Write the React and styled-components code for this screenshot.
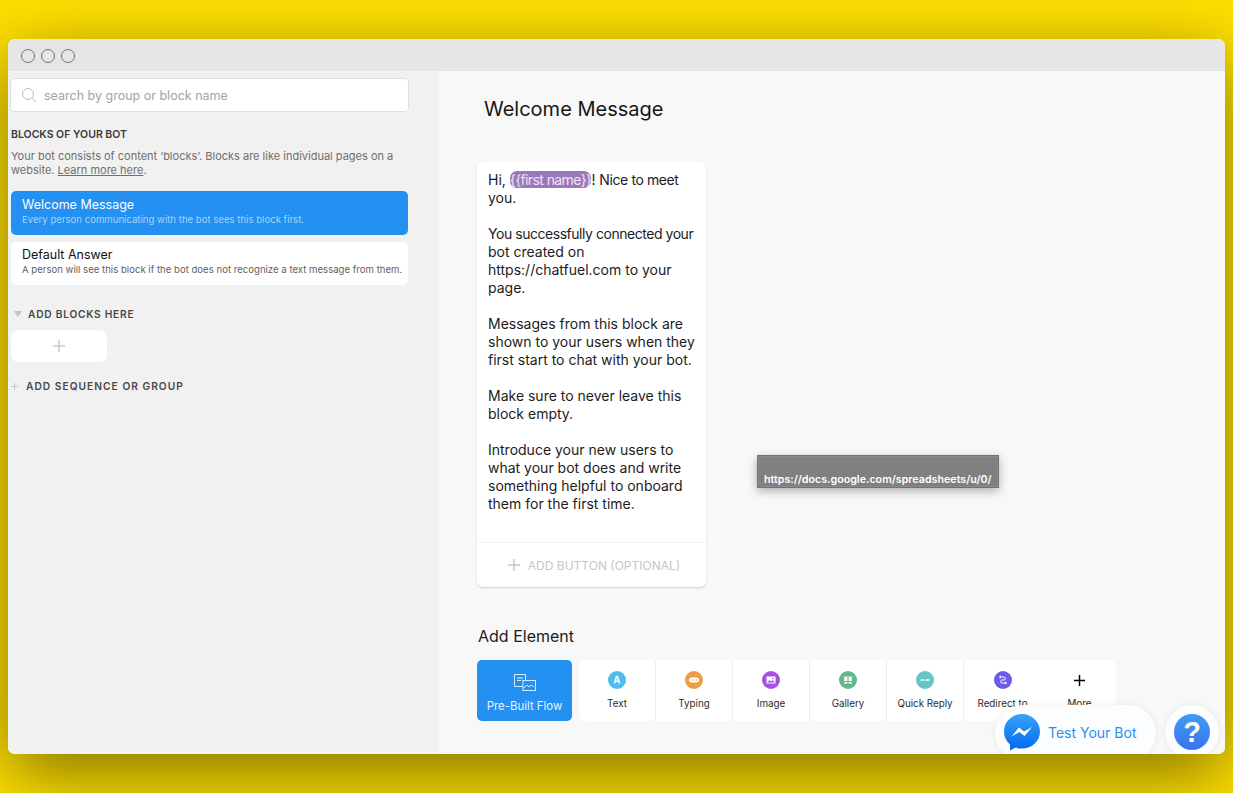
import React from "react";
import styled, { createGlobalStyle } from "styled-components";

const Global = createGlobalStyle`
  html, body { margin: 0; padding: 0; height: 100%; }
  body {
    font-family: Inter, "Liberation Sans", sans-serif;
    background: #ffe000;
    overflow: hidden;
    -webkit-font-smoothing: antialiased;
  }
`;

const Page = styled.div`
  height: 793px;
  box-sizing: border-box;
  padding: 39px 8px;
`;

const Win = styled.div`
  position: relative;
  height: 715px;
  border-radius: 7px;
  overflow: hidden;
  display: flex;
  flex-direction: column;
  background: #f8f8f8;
`;

const Shadow = styled.div`
  border-radius: 7px;
  box-shadow: 0 20px 70px rgba(0, 0, 0, 0.5);
`;

const TitleBar = styled.div`
  height: 32px;
  flex: none;
  box-sizing: border-box;
  background: #e6e6e6;
  display: flex;
  align-items: center;
  gap: 6px;
  padding: 2px 0 0 13px;
`;

const Light = styled.span`
  width: 14px;
  height: 14px;
  box-sizing: border-box;
  border: 1.5px solid #747474;
  border-radius: 50%;
`;

const Body = styled.div`
  flex: 1;
  display: flex;
  min-height: 0;
`;

const Side = styled.aside`
  width: 430px;
  flex: none;
  background: #f1f1f1;
  padding: 7px 29px 0 2px;
  box-sizing: border-box;
`;

const Search = styled.div`
  height: 34px;
  box-sizing: border-box;
  background: #fff;
  border: 1px solid #dedede;
  border-radius: 4px;
  display: flex;
  align-items: center;
  gap: 7px;
  padding-left: 10px;
  font-size: 12.5px;
  color: #a3a3a3;
`;

const Heading = styled.h3`
  margin: 16px 0 0 1px;
  font-size: 10.5px;
  line-height: 14px;
  font-weight: 600;
  color: #3c3c3c;
`;

const Hint = styled.p`
  margin: 7px 0 0 1px;
  font-size: 11px;
  line-height: 14px;
  color: #6f6f6f;

  u {
    text-underline-offset: 1px;
  }
`;

const BlockCard = styled.div`
  margin: ${(p) => (p.$active ? "14px" : "7px")} 1px 0;
  height: ${(p) => (p.$active ? "44px" : "43px")};
  box-sizing: border-box;
  padding: ${(p) => (p.$active ? "6px" : "5px")} 0 0 11px;
  border-radius: 5px;
  background: ${(p) => (p.$active ? "#2390f2" : "#fff")};
`;

const BlockTitle = styled.div`
  font-size: 12.5px;
  line-height: 15px;
  color: ${(p) => (p.$active ? "#fff" : "#111")};
`;

const BlockDesc = styled.div`
  margin-top: 1px;
  font-size: 9.6px;
  line-height: 14px;
  white-space: nowrap;
  color: ${(p) => (p.$active ? "#a6d2fa" : "#5f5f5f")};
`;

const GroupRow = styled.div`
  display: flex;
  align-items: center;
  height: 14px;
  margin-top: ${(p) => p.$top}px;
  padding-left: ${(p) => p.$left}px;
  gap: ${(p) => p.$gap}px;
  font-size: 10.2px;
  font-weight: 600;
  letter-spacing: ${(p) => p.$spacing}px;
  color: #484848;
`;

const Caret = styled.span`
  width: 0;
  height: 0;
  border-left: 4px solid transparent;
  border-right: 4px solid transparent;
  border-top: 6px solid #c4c4c4;
`;

const AddBlock = styled.div`
  margin: 9px 0 0 1px;
  width: 96px;
  height: 32px;
  border-radius: 7px;
  background: #fff;
  display: flex;
  align-items: center;
  justify-content: center;
`;

const Main = styled.main`
  flex: 1;
  background: #f8f8f8;
  padding: 26px 0 0 39px;
`;

const Title = styled.h1`
  margin: 0 0 0 7px;
  font-size: 20px;
  line-height: 24px;
  font-weight: 400;
  color: #161616;
`;

const MessageCard = styled.section`
  margin-top: 41px;
  width: 229px;
  height: 425px;
  box-sizing: border-box;
  background: #fff;
  border-radius: 6px;
  box-shadow: 0 1px 2px rgba(0, 0, 0, 0.16);
  display: flex;
  flex-direction: column;
`;

const MessageText = styled.div`
  flex: 1;
  padding: 9px 8px 0 11px;
  font-size: 14px;
  line-height: 18px;
  color: #1c1c1c;
`;

const Para = styled.p`
  margin: 0 0 18px;
`;

const Tight = styled.span`
  letter-spacing: ${(p) => p.$by}px;
`;

const Token = styled.span`
  background: #9b78bb;
  color: #eee6f4;
  border-radius: 7px;
  letter-spacing: -0.6px;
`;

const AddButton = styled.div`
  height: 45px;
  flex: none;
  box-sizing: border-box;
  padding-left: 5px;
  border-top: 1px solid #f4f4f4;
  display: flex;
  align-items: center;
  justify-content: center;
  gap: 8px;
  font-size: 12px;
  color: #c6c6c6;
`;

const AddTitle = styled.h2`
  margin: 39px 0 0 1px;
  font-size: 16px;
  line-height: 20px;
  font-weight: 400;
  color: #1c1c1c;
`;

const ElementRow = styled.div`
  margin-top: 14px;
  display: flex;
  gap: 7px;
`;

const FlowButton = styled.div`
  width: 95px;
  height: 61px;
  box-sizing: border-box;
  padding-top: 14px;
  border-radius: 5px;
  background: #2390f2;
  color: #eaf4fe;
  font-size: 11.4px;
  line-height: 14px;
  display: flex;
  flex-direction: column;
  align-items: center;
  gap: 8px;
`;

const Tiles = styled.div`
  display: flex;
  width: 537px;
  height: 61px;
  background: #fff;
  border-radius: 7px;
`;

const Tile = styled.div`
  width: 77px;
  flex: none;
  box-sizing: border-box;
  height: 60px;
  margin-top: 1px;
  padding-top: 10px;
  border-right: ${(p) => (p.$plain ? "none" : "1px solid #eeeeee")};
  display: flex;
  flex-direction: column;
  align-items: center;
  gap: 9px;
  font-size: 9.8px;
  line-height: 12px;
  color: #2b2b2b;
  white-space: nowrap;
`;

const IconDot = styled.span`
  width: 18px;
  height: 18px;
  flex: none;
  border-radius: 50%;
  background: ${(p) => p.$color};
  display: flex;
  align-items: center;
  justify-content: center;
`;

const Tooltip = styled.div`
  position: absolute;
  left: 749px;
  top: 416px;
  width: 242px;
  height: 33px;
  box-sizing: border-box;
  background: #808080;
  border: 1px solid #727272;
  box-shadow: inset 0 0 0 1px #8a8a8a, 0 3px 9px rgba(0, 0, 0, 0.3);
  padding: 16px 0 0 6px;
  font-size: 10.7px;
  line-height: 16px;
  font-weight: 600;
  color: #fff;
  white-space: nowrap;
`;

const TestPill = styled.div`
  position: absolute;
  left: 987px;
  top: 666px;
  width: 161px;
  height: 56px;
  box-sizing: border-box;
  padding-left: 9px;
  border-radius: 28px;
  background: #fcfdff;
  box-shadow: 0 0 6px rgba(0, 0, 0, 0.08);
  display: flex;
  align-items: flex-start;
  gap: 8px;
  color: #2a90ee;
  font-size: 14px;
  line-height: 36px;
`;

const PillIcon = styled.svg`
  margin-top: 9px;
  flex: none;
`;

const PillLabel = styled.span`
  margin-top: 10px;
`;

const HelpBubble = styled.div`
  position: absolute;
  left: 1157px;
  top: 666px;
  width: 54px;
  height: 54px;
  border-radius: 50%;
  background: #fcfdff;
  box-shadow: 0 0 6px rgba(0, 0, 0, 0.08);
  display: flex;
  align-items: center;
  justify-content: center;
`;

const HelpDot = styled.div`
  width: 36px;
  height: 36px;
  border-radius: 50%;
  background: linear-gradient(180deg, #3d9df5, #3a72f0);
  color: #fff;
  font-family: "Liberation Sans", sans-serif;
  font-size: 29px;
  font-weight: 700;
  line-height: 36px;
  text-align: center;
`;

const Plus = ({ size, color, width = 1.5 }) => (
  <svg width={size} height={size} viewBox="0 0 12 12">
    <path d="M6 0v12M0 6h12" stroke={color} strokeWidth={width} fill="none" />
  </svg>
);

const SearchIcon = () => (
  <svg width="16" height="16" viewBox="0 0 16 16" fill="none" stroke="#bdbdbd" strokeWidth="1">
    <circle cx="7" cy="7" r="5.5" />
    <path d="M11 11l4 4" />
  </svg>
);

const FlowIcon = () => (
  <svg width="22" height="17" viewBox="0 0 22 17" fill="none" stroke="#d7eafc" strokeWidth="1">
    <path d="M9 12.5H.5V.5h11v5.5" />
    <path d="M3 4h6M3 6.5h4" />
    <rect x="9" y="6.5" width="12.5" height="10" fill="#2390f2" />
    <path d="M10 14l3-3 2 2 2-2 3 2" />
  </svg>
);

const glyphs = {
  text: <path d="M4.400 10.500L6.500 3.500h1l2.100 7M5.300 8.200h3.400" stroke="#fff" strokeWidth="1.500" fill="none" />,
  typing: (
    <>
      <rect x="2" y="4.500" width="10" height="5" rx="2.500" fill="#fff" />
      <path d="M4 7h1.200M6.400 7h1.200M8.800 7h1.200" stroke="#ee9d44" strokeWidth="1.200" />
    </>
  ),
  image: (
    <>
      <rect x="2.500" y="3.500" width="9" height="7" fill="#fff" />
      <path d="M3.200 9.500l2.300-2.500 1.600 1.500 1.600-1.600 2.100 2.600z" fill="#a552e4" />
      <circle cx="9" cy="5.500" r=".8" fill="#a552e4" />
    </>
  ),
  gallery: (
    <>
      <rect x="3.200" y="3.500" width="3.200" height="4.500" fill="#fff" />
      <rect x="7.600" y="3.500" width="3.200" height="4.500" fill="#fff" />
      <rect x="3.200" y="9" width="3.200" height="1.500" fill="#fff" />
      <rect x="7.600" y="9" width="3.200" height="1.500" fill="#fff" />
    </>
  ),
  reply: (
    <>
      <rect x="2.500" y="6.200" width="4" height="1.600" rx=".6" fill="#fff" />
      <rect x="7.500" y="6.200" width="4" height="1.600" rx=".6" fill="#fff" />
    </>
  ),
  redirect: (
    <path d="M3.500 4h4.500c2 0 2 3 0 3H6c-2 0-2 3 0 3h4.500M5 2.800L3.500 4 5 5.200M9 8.800L10.500 10 9 11.200" stroke="#fff" strokeWidth="1" fill="none" />
  ),
};

const tiles = [
  { label: "Text", color: "#4dbdee", glyph: "text" },
  { label: "Typing", color: "#ee9d44", glyph: "typing" },
  { label: "Image", color: "#a552e4", glyph: "image" },
  { label: "Gallery", color: "#62b78f", glyph: "gallery" },
  { label: "Quick Reply", color: "#66c6c3", glyph: "reply" },
  { label: "Redirect to", color: "#6c5ce7", glyph: "redirect", plain: true },
];

const App = () => (
  <>
    <Global />
    <Page>
      <Shadow>
        <Win>
          <TitleBar>
            <Light />
            <Light />
            <Light />
          </TitleBar>
          <Body>
            <Side>
              <Search>
                <SearchIcon />
                search by group or block name
              </Search>
              <Heading>BLOCKS OF YOUR BOT</Heading>
              <Hint>
                Your bot consists of content ‘blocks’. Blocks are like individual pages on a
                website. <u>Learn more here</u>.
              </Hint>
              <BlockCard $active>
                <BlockTitle $active>Welcome Message</BlockTitle>
                <BlockDesc $active>Every person communicating with the bot sees this block first.</BlockDesc>
              </BlockCard>
              <BlockCard>
                <BlockTitle>Default Answer</BlockTitle>
                <BlockDesc>A person will see this block if the bot does not recognize a text message from them.</BlockDesc>
              </BlockCard>
              <GroupRow $top={22} $left={4} $gap={6} $spacing={0.75}>
                <Caret />
                ADD BLOCKS HERE
              </GroupRow>
              <AddBlock>
                <Plus size={12} color="#c9c9c9" />
              </AddBlock>
              <GroupRow $top={17} $left={1} $gap={8} $spacing={1.03}>
                <Plus size={7} color="#c4c4c4" />
                ADD SEQUENCE OR GROUP
              </GroupRow>
            </Side>
            <Main>
              <Title>Welcome Message</Title>
              <MessageCard>
                <MessageText>
                  <Para>
                    Hi, <Token>{"{{first name}}"}</Token>! <Tight $by={-0.4}>Nice to meet</Tight> you.
                  </Para>
                  <Para>
                    <Tight $by={-0.46}>You successfully connected your</Tight> bot created on https://chatfuel.com to your page.
                  </Para>
                  <Para>Messages from this block are shown to your users when they first start to chat with your bot.</Para>
                  <Para>Make sure to never leave this block empty.</Para>
                  <Para>Introduce your new users to what your bot does and write something helpful to onboard them for the first time.</Para>
                </MessageText>
                <AddButton>
                  <Plus size={12} color="#c6c6c6" />
                  ADD BUTTON (OPTIONAL)
                </AddButton>
              </MessageCard>
              <AddTitle>Add Element</AddTitle>
              <ElementRow>
                <FlowButton>
                  <FlowIcon />
                  Pre-Built Flow
                </FlowButton>
                <Tiles>
                  {tiles.map((t) => (
                    <Tile key={t.label} $plain={t.plain}>
                      <IconDot $color={t.color}>
                        <svg width="14" height="14" viewBox="0 0 14 14">{glyphs[t.glyph]}</svg>
                      </IconDot>
                      {t.label}
                    </Tile>
                  ))}
                  <Tile $plain>
                    <IconDot $color="transparent">
                      <Plus size={11} color="#000" width={1.6} />
                    </IconDot>
                    More
                  </Tile>
                </Tiles>
              </ElementRow>
            </Main>
          </Body>
          <Tooltip>https://docs.google.com/spreadsheets/u/0/</Tooltip>
          <TestPill>
            <PillIcon width="36" height="37" viewBox="0 0 36 37">
              <defs>
                <linearGradient id="msgr" x1="0" y1="0" x2="0" y2="1">
                  <stop offset="0" stopColor="#3ba1fa" />
                  <stop offset="1" stopColor="#0069f0" />
                </linearGradient>
              </defs>
              <path d="M18 0C8 0 0 7.500 0 17.500c0 5.300 2.200 9.800 6 13v6l5.600-3c2 .7 4.200 1 6.400 1 10 0 18-7.500 18-17S28 0 18 0z" fill="url(#msgr)" />
              <path d="M7.500 22.500L15 13.500l5 4 8-4.500-7.500 9-5-4z" fill="#fff" />
            </PillIcon>
            <PillLabel>Test Your Bot</PillLabel>
          </TestPill>
          <HelpBubble>
            <HelpDot>?</HelpDot>
          </HelpBubble>
        </Win>
      </Shadow>
    </Page>
  </>
);

export default App;
